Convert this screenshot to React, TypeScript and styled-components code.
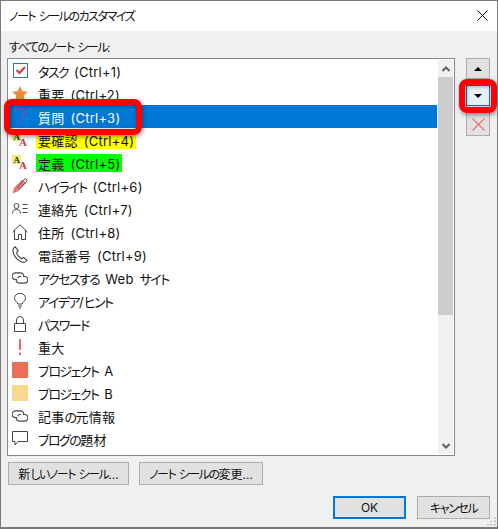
import React from 'react';
import styled, { createGlobalStyle } from 'styled-components';

const GlobalStyle = createGlobalStyle`
  html, body {
    margin: 0;
    padding: 0;
    background: #f0f0f0;
  }
  body {
    font-family: Inter, "Noto Sans CJK JP", sans-serif;
    font-feature-settings: "palt";
    font-size: 12px;
    color: #111;
  }
`;

const IconCheck = () => (
  <svg width="16" height="16" viewBox="0 0 16 16">
    <rect x="1.5" y="0.5" width="14" height="14" fill="#fff" stroke="#2b7c9f" />
    <path d="M4.5 7l3 3 5.500-6" fill="none" stroke="#d8343a" strokeWidth="2" />
  </svg>
);
const IconStar = () => (
  <svg width="16" height="16" viewBox="0 0 16 16">
    <path d="M8 0l2.400 5.200 5.600.6-4.200 3.800 1.200 5.700L8 12.400l-5 2.900 1.200-5.700L0 5.800l5.600-.6z" fill="#ed8936" />
  </svg>
);
const IconQuestion = () => (
  <svg width="12" height="18" viewBox="0 0 12 18">
    <path d="M1 4.500C1 2 3 .7 5.800.7s5 1.500 5 3.900c0 3.400-4.300 3.700-4.300 7.600M6.500 14.500v2.500" fill="none" stroke="#8e45c0" strokeWidth="1.300" />
  </svg>
);
const IconFont = () => (
  <svg width="16" height="16" viewBox="0 0 16 16" overflow="visible" fontFamily="Liberation Serif, serif" fontWeight="bold">
    <rect x="0" y="0" width="9" height="9" fill="#f0ee7c" />
    <text x="1.500" y="8" fontSize="9" fill="#222">A</text>
    <text x="7" y="14" fontSize="11" fill="#d8343a">A</text>
  </svg>
);
const IconPen = () => (
  <svg width="16" height="17" viewBox="0 0 16 17">
    <path d="M.8 16.500l1.200-5 3 3z" fill="#ee5f5f" />
    <path d="M2 11.500L10.500 3l3 3L5 14.500z" fill="#ee7f7f" stroke="#ee6464" />
    <path d="M5 11L12 2.500c1-1.200 3.500-.5 3 1.500L6.500 13" fill="none" stroke="#555" />
  </svg>
);
const IconContact = () => (
  <svg width="16" height="11" viewBox="0 0 16 11" fill="none" stroke="#444">
    <circle cx="4.500" cy="3" r="2.500" />
    <path d="M.5 10.500c0-2.700 1.500-4 4-4s4 1.300 4 4M10.500 1.500h5M10.500 5.500h5M10.500 9.500h5" />
  </svg>
);
const IconHome = () => (
  <svg width="16" height="16" viewBox="0 0 16 16" fill="none" stroke="#444">
    <path d="M.5 8L8 .8 15.500 8M2.500 6.200v9.300h4v-5h3v5h4V6.200" />
  </svg>
);
const IconPhone = () => (
  <svg width="16" height="17" viewBox="0 0 16 17" fill="none" stroke="#444" strokeWidth="1.100">
    <path d="M3.200.8C1 2 .4 4 1.400 7c1.200 3.500 4 7 7.600 8.800 2.500 1 4.600.5 6.200-1.300l-3.600-3-2.100 1.300C7.500 11.600 5 8.500 4.500 6.400L6.200 5z" />
  </svg>
);
const IconLink = () => (
  <svg width="16" height="12" viewBox="0 0 16 12" fill="none" stroke="#444" strokeWidth="1.100">
    <path d="M5 7.500H3.500a3.300 3.300 0 010-6.600h5a3.300 3.300 0 013.300 3.300" />
    <path d="M11 4.500h1.500a3.300 3.300 0 010 6.600h-5A3.300 3.300 0 014.200 7.800" />
    <path d="M6 6.200c0-1 .7-1.700 1.800-1.700h1.400" />
  </svg>
);
const IconBulb = () => (
  <svg width="12" height="16" viewBox="0 0 12 16" fill="none" stroke="#444">
    <path d="M3.800 11C3.500 9 .5 8 .5 5.300a5.500 5 0 0111 0C11.500 8 8.500 9 8.200 11zM4 13h4M5 15h2" />
  </svg>
);
const IconLock = () => (
  <svg width="12" height="16" viewBox="0 0 12 16" fill="none" stroke="#444">
    <path d="M.5 7.500h11v8H.5zM2.500 7.500V4a3.500 3.500 0 017 0v3.500" />
  </svg>
);
const IconBang = () => (
  <svg width="2" height="16" viewBox="0 0 2 16">
    <path d="M0 0h2v11H0zM0 13.500h2V16H0z" fill="#ee6464" />
  </svg>
);
const IconComment = () => (
  <svg width="16" height="15" viewBox="0 0 16 15" fill="none" stroke="#444">
    <path d="M.5.500h15v10H6l-3 3.500v-3.500H.5z" />
  </svg>
);
const IconNext = () => (
  <svg width="16" height="16" viewBox="0 0 16 16">
    <path d="M0 4.500h16" stroke="#2b7c9f" strokeWidth="1.500" />
  </svg>
);

const ArrowUp = () => (
  <svg width="8" height="4" viewBox="0 0 8 4"><path d="M0 4l4-4 4 4z" fill="#000" /></svg>
);
const ArrowDown = () => (
  <svg width="8" height="4" viewBox="0 0 8 4"><path d="M0 0l4 4 4-4z" fill="#000" /></svg>
);
const Chevron = ({ up }: { up?: boolean }) => (
  <svg width="8" height="6" viewBox="0 0 8 6">
    <path d={up ? 'M.5 5L4 1.500 7.500 5' : 'M.5 1L4 4.500 7.500 1'} fill="none" stroke="#606060" strokeWidth="2" />
  </svg>
);

const Window = styled('div')`
  position: relative;
  width: 498px;
  height: 529px;
  box-sizing: border-box;
  border: 1px solid #7a7a7a;
  border-bottom-width: 2px;
  overflow: hidden;
  background: #f0f0f0;
  display: flex;
  flex-direction: column;
`;

const TitleBar = styled('div')`
  height: 30px;
  background: #fff;
  display: flex;
  align-items: center;
  justify-content: space-between;
  padding: 0 9px 2px 8px;
  box-sizing: border-box;
  flex-shrink: 0;
`;

const Body = styled('div')`
  flex: 1;
  padding: 8px 7px 0 6px;
  display: flex;
  flex-direction: column;
`;

const Label = styled('div')`
  line-height: 17px;
  height: 19px;
  padding-left: 2px;
`;

const Main = styled('div')`
  display: flex;
  align-items: flex-start;
`;

const ListBox = styled('div')`
  width: 448px;
  height: 398px;
  box-sizing: border-box;
  border: 1px solid #828790;
  background: #fff;
  display: flex;
  overflow: hidden;
`;

const Rows = styled('div')`
  flex: 1;
  overflow: hidden;
`;

const Row = styled('div')<{ $selected?: boolean }>`
  height: 23px;
  display: flex;
  align-items: center;
  background: ${({ $selected }) => ($selected ? '#0078d7' : 'transparent')};
  color: ${({ $selected }) => ($selected ? '#fff' : '#111')};
  font-size: 13px;
  word-spacing: 2px;
  letter-spacing: 0.25px;
`;

const IconCell = styled('div')`
  width: 28px;
  flex-shrink: 0;
  display: flex;
  align-items: center;
  justify-content: center;
  padding: 0 8px 0 4px;
  box-sizing: border-box;
  height: 100%;
`;

const RowText = styled('span')<{ $mark?: string }>`
  background: ${({ $mark }) => $mark || 'transparent'};
  line-height: 16px;
  padding: 2px 2px 0;
  white-space: nowrap;
`;

const Kana = styled('span')`
  letter-spacing: -0.12em;
`;

const Swatch = styled('div')<{ $color: string }>`
  width: 16px;
  height: 16px;
  flex-shrink: 0;
  background: ${({ $color }) => $color};
`;

const ScrollBar = styled('div')`
  width: 15px;
  margin: 1px;
  background: #f0f0f0;
  display: flex;
  flex-direction: column;
  flex-shrink: 0;
`;

const ScrollArrow = styled('div')`
  height: 17px;
  display: flex;
  align-items: center;
  justify-content: center;
  flex-shrink: 0;
`;

const ScrollThumb = styled('div')`
  height: 238px;
  background: #cdcdcd;
  flex-shrink: 0;
`;

const ScrollTrack = styled('div')`
  flex: 1;
`;

const SideButtons = styled('div')`
  margin-left: 11px;
  display: flex;
  flex-direction: column;
  width: 24px;
`;

const SideButton = styled('div')<{ $hot?: boolean; $height: number; $gap?: number }>`
  height: ${({ $height }) => $height}px;
  margin-top: ${({ $gap }) => $gap || 0}px;
  box-sizing: border-box;
  border: 1px solid ${({ $hot }) => ($hot ? '#0078d7' : '#adadad')};
  background: ${({ $hot }) => ($hot ? '#e5f1fb' : '#e1e1e1')};
  display: flex;
  align-items: center;
  justify-content: center;
`;

const ListActions = styled('div')`
  display: flex;
  gap: 10px;
  margin-top: 6px;
  padding-left: 1px;
`;

const Button = styled('div')<{ $width: number; $primary?: boolean }>`
  width: ${({ $width }) => $width}px;
  height: 23px;
  box-sizing: border-box;
  border: ${({ $primary }) => ($primary ? '2px solid #0078d7' : '1px solid #adadad')};
  background: #e1e1e1;
  display: flex;
  align-items: center;
  justify-content: center;
  white-space: pre;
`;

const Footer = styled('div')`
  display: flex;
  justify-content: flex-end;
  gap: 11px;
  margin-top: 11px;
`;

const Callout = styled('div')<{ $left: number; $top: number; $width: number; $height: number }>`
  position: absolute;
  left: ${({ $left }) => $left}px;
  top: ${({ $top }) => $top}px;
  width: ${({ $width }) => $width}px;
  height: ${({ $height }) => $height}px;
  box-sizing: border-box;
  border: 6px solid #f00;
  border-radius: 8px;
  box-shadow: 1px 2px 4px rgba(0, 0, 0, 0.4), inset 1px 1px 4px rgba(0, 0, 0, 0.45);
`;

const Grip = styled('div')`
  position: absolute;
  right: 1px;
  bottom: 1px;
  width: 10px;
  height: 10px;
  background-image: radial-gradient(#b8b8b8 1.2px, transparent 1.3px);
  background-size: 3.500px 3.500px;
  clip-path: polygon(100% 0, 100% 100%, 0 100%);
`;

// the reference font has much narrower kana than Noto, so kana runs get tightened
const tight = (text: string) =>
  text.split(/([\u3040-\u30ff]+)/).map((part, i) => (i % 2 ? <Kana key={i}>{part}</Kana> : part));

const rows = [
  { icon: <IconCheck />, label: 'タスク (Ctrl+1)' },
  { icon: <IconStar />, label: '重要 (Ctrl+2)' },
  { icon: <IconQuestion />, label: '質問 (Ctrl+3)', selected: true },
  { icon: <IconFont />, label: '要確認 (Ctrl+4)', mark: '#ffff00' },
  { icon: <IconFont />, label: '定義 (Ctrl+5)', mark: '#00ff00' },
  { icon: <IconPen />, label: 'ハイライト (Ctrl+6)' },
  { icon: <IconContact />, label: '連絡先 (Ctrl+7)' },
  { icon: <IconHome />, label: '住所 (Ctrl+8)' },
  { icon: <IconPhone />, label: '電話番号 (Ctrl+9)' },
  { icon: <IconLink />, label: 'アクセスする Web サイト' },
  { icon: <IconBulb />, label: 'アイデア/ヒント' },
  { icon: <IconLock />, label: 'パスワード' },
  { icon: <IconBang />, label: '重大' },
  { icon: <Swatch $color="#ee6f57" />, label: 'プロジェクト A' },
  { icon: <Swatch $color="#f8d78f" />, label: 'プロジェクト B' },
  { icon: <IconLink />, label: '記事の元情報' },
  { icon: <IconComment />, label: 'ブログの題材' },
  { icon: <IconNext />, label: '' },
];

export default function App() {
  return (
    <Window>
      <GlobalStyle />
      <TitleBar>
        <span>{tight('ノート シールのカスタマイズ')}</span>
        <svg width="11" height="11" viewBox="0 0 11 11">
          <path d="M.5.5l10 10M10.500.5l-10 10" stroke="#111" fill="none" />
        </svg>
      </TitleBar>
      <Body>
        <Label>{tight('すべてのノート シール:')}</Label>
        <Main>
          <ListBox>
            <Rows>
              {rows.map((row) => (
                <Row key={row.label} $selected={row.selected}>
                  <IconCell>{row.icon}</IconCell>
                  <RowText $mark={row.mark}>{tight(row.label)}</RowText>
                </Row>
              ))}
            </Rows>
            <ScrollBar>
              <ScrollArrow><Chevron up /></ScrollArrow>
              <ScrollThumb />
              <ScrollTrack />
              <ScrollArrow><Chevron /></ScrollArrow>
            </ScrollBar>
          </ListBox>
          <SideButtons>
            <SideButton $height={21}><ArrowUp /></SideButton>
            <SideButton $hot $height={21} $gap={6}><ArrowDown /></SideButton>
            <SideButton $height={24} $gap={6}>
              <svg width="13" height="13" viewBox="0 0 13 13">
                <path d="M.5.5l12 12M12.500.5l-12 12" stroke="#f07070" strokeWidth="1.200" fill="none" />
              </svg>
            </SideButton>
          </SideButtons>
        </Main>
        <ListActions>
          <Button $width={121}><span>{tight('新しいノート シール...')}</span></Button>
          <Button $width={124}><span>{tight('ノート シールの変更...')}</span></Button>
        </ListActions>
        <Footer>
          <Button $width={73} $primary>OK</Button>
          <Button $width={73}><span>{tight('キャンセル')}</span></Button>
        </Footer>
      </Body>
      <Callout $left={3} $top={98} $width={138} $height={36} />
      <Callout $left={458} $top={78} $width={38} $height={34} />
      <Grip />
    </Window>
  );
}
